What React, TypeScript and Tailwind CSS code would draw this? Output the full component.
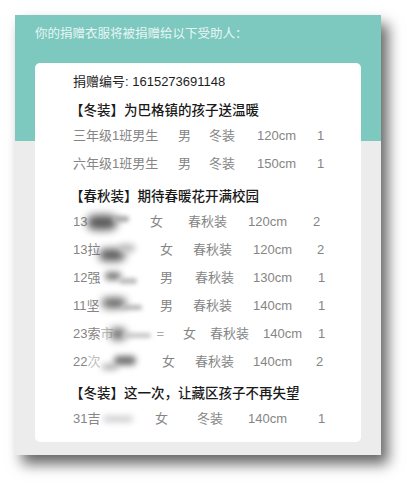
import React from "react";

type Row = {
  name: React.ReactNode;
  cells: { text: string; w: string }[];
  last: string;
  nw: string;
};

const Blob = ({ c }: { c: string }) => <span className={c} />;

const rowsA: Row[] = [
  {
    name: <span>三年级1班男生</span>,
    nw: "w-[105px]",
    cells: [
      { text: "男", w: "w-[31px]" },
      { text: "冬装", w: "w-[48px]" },
      { text: "120cm", w: "w-[60px]" },
    ],
    last: "1",
  },
  {
    name: <span>六年级1班男生</span>,
    nw: "w-[105px]",
    cells: [
      { text: "男", w: "w-[31px]" },
      { text: "冬装", w: "w-[48px]" },
      { text: "150cm", w: "w-[60px]" },
    ],
    last: "1",
  },
];

const rowsB: Row[] = [
  {
    name: (
      <>
        <span>13</span>
        <Blob c="ml-[0px] inline-block h-[15px] w-[30px] rounded-full bg-[#585858] blur-[4px]" />
        <Blob c="ml-[-4px] mb-[7px] inline-block h-[6px] w-[16px] rounded-full bg-[#a8a8a8] blur-[2px]" />
      </>
    ),
    nw: "w-[77px]",
    cells: [
      { text: "女", w: "w-[38px]" },
      { text: "春秋装", w: "w-[60px]" },
      { text: "120cm", w: "w-[65px]" },
    ],
    last: "2",
  },
  {
    name: (
      <>
        <span>13拉</span>
        <Blob c="ml-[-1px] mt-[10px] inline-block h-[12px] w-[26px] rounded-full bg-[#555555] blur-[4px]" />
        <Blob c="ml-[-6px] mb-[5px] inline-block h-[8px] w-[16px] rounded-full bg-[#bdbdbd] blur-[3px]" />
      </>
    ),
    nw: "w-[87px]",
    cells: [
      { text: "女", w: "w-[33px]" },
      { text: "春秋装", w: "w-[60px]" },
      { text: "120cm", w: "w-[64px]" },
    ],
    last: "2",
  },
  {
    name: (
      <>
        <span>12强</span>
        <Blob c="ml-[5px] mb-[5px] inline-block h-[8px] w-[16px] rounded-full bg-[#777777] blur-[3px]" />
        <Blob c="ml-[-2px] mt-[5px] inline-block h-[6px] w-[18px] rounded-full bg-[#bcbcbc] blur-[2px]" />
      </>
    ),
    nw: "w-[87px]",
    cells: [
      { text: "男", w: "w-[35px]" },
      { text: "春秋装", w: "w-[58px]" },
      { text: "130cm", w: "w-[65px]" },
    ],
    last: "1",
  },
  {
    name: (
      <>
        <span>11坚</span>
        <Blob c="ml-[2px] mb-[6px] inline-block h-[10px] w-[24px] rounded-full bg-[#5c5c5c] blur-[4px]" />
        <Blob c="ml-[-4px] mt-[3px] inline-block h-[5px] w-[20px] rounded-full bg-[#b4b4b4] blur-[2px]" />
      </>
    ),
    nw: "w-[87px]",
    cells: [
      { text: "男", w: "w-[33px]" },
      { text: "春秋装", w: "w-[60px]" },
      { text: "140cm", w: "w-[65px]" },
    ],
    last: "1",
  },
  {
    name: (
      <>
        <span>23索</span>
        <span className="text-[#bcbcbc]">市</span>
        <Blob c="ml-[-3px] inline-block h-[12px] w-[16px] rounded-full bg-[#666666] blur-[4px]" />
        <Blob c="ml-[-3px] mt-[3px] inline-block h-[5px] w-[28px] rounded-full bg-[#c6c6c6] blur-[2px]" />
        <span className="ml-[5px] text-[#aaaaaa]">=</span>
      </>
    ),
    nw: "w-[110px]",
    cells: [
      { text: "女", w: "w-[27px]" },
      { text: "春秋装", w: "w-[53px]" },
      { text: "140cm", w: "w-[55px]" },
    ],
    last: "1",
  },
  {
    name: (
      <>
        <span>22</span>
        <span className="text-[#bebebe]">次</span>
        <Blob c="ml-[2px] mt-[9px] inline-block h-[6px] w-[16px] rounded-full bg-[#b0b0b0] blur-[3px]" />
        <Blob c="ml-[-4px] mb-[3px] inline-block h-[9px] w-[22px] rounded-full bg-[#6e6e6e] blur-[3px]" />
      </>
    ),
    nw: "w-[89px]",
    cells: [
      { text: "女", w: "w-[33px]" },
      { text: "春秋装", w: "w-[58px]" },
      { text: "140cm", w: "w-[63px]" },
    ],
    last: "2",
  },
];

const rowsC: Row[] = [
  {
    name: (
      <>
        <span>31吉</span>
        <Blob c="ml-[3px] inline-block h-[6px] w-[30px] rounded-full bg-[#cccccc] blur-[3px]" />
      </>
    ),
    nw: "w-[82px]",
    cells: [
      { text: "女", w: "w-[42px]" },
      { text: "冬装", w: "w-[51px]" },
      { text: "140cm", w: "w-[70px]" },
    ],
    last: "1",
  },
];

function DataRow({ r }: { r: Row }) {
  return (
    <div className="flex h-[28px] items-center text-[13px] text-[#858585]">
      <div className={`${r.nw} flex shrink-0 items-center whitespace-nowrap`}>{r.name}</div>
      {r.cells.map((c, i) => (
        <div key={i} className={`${c.w} shrink-0 whitespace-nowrap`}>
          {c.text}
        </div>
      ))}
      <div className="whitespace-nowrap">{r.last}</div>
    </div>
  );
}

function Header({ text, mt }: { text: string; mt: string }) {
  return (
    <div className={`${mt} ml-[-3px] flex h-[22px] items-center whitespace-nowrap text-[13.5px] font-medium text-[#1a1a1a]`}>
      {text}
    </div>
  );
}

export default function App() {
  return (
    <div
      className="h-[493px] w-[418px] bg-white pl-[15px] pt-[15px]"
      style={{ fontFamily: '"Liberation Sans", "Noto Sans CJK SC", sans-serif' }}
    >
      <div className="h-[440px] w-[366px] bg-[linear-gradient(to_bottom,#7dc9bf_126px,#ececec_126px)] px-[20px] pt-[9px] shadow-[7px_9px_13px_rgba(0,0,0,0.6)]">
        <div className="flex h-[20px] items-center whitespace-nowrap text-[12.5px] text-[rgba(255,255,255,0.85)]">
          你的捐赠衣服将被捐赠给以下受助人：
        </div>
        <div className="mt-[19px] rounded-[5px] bg-white pb-[9px] pl-[38px] pt-[5px]">
          <div className="flex h-[28px] items-center whitespace-nowrap text-[13px] text-[#1e1e1e]">
            捐赠编号: 1615273691148
          </div>
          <Header text="【冬装】为巴格镇的孩子送温暖" mt="mt-[4px]" />
          {rowsA.map((r, i) => (
            <DataRow key={i} r={r} />
          ))}
          <Header text="【春秋装】期待春暖花开满校园" mt="mt-[8px]" />
          {rowsB.map((r, i) => (
            <DataRow key={i} r={r} />
          ))}
          <Header text="【冬装】这一次，让藏区孩子不再失望" mt="mt-[7px]" />
          {rowsC.map((r, i) => (
            <DataRow key={i} r={r} />
          ))}
        </div>
      </div>
    </div>
  );
}
